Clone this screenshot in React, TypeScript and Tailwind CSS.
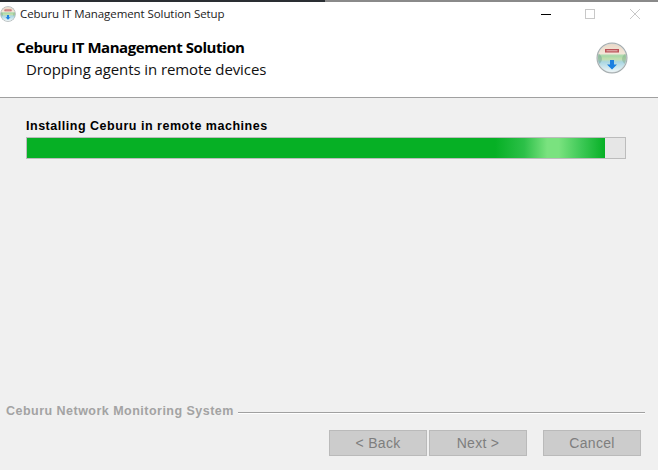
import type { FC } from 'react';

const SetupIcon: FC<{ size: number; id: string }> = ({ size, id }) => (
    <svg width={size} height={size} viewBox="0 0 32 32">
        <defs>
            <clipPath id={`${id}-clip`}>
                <circle cx="16" cy="16" r="14" />
            </clipPath>
            <linearGradient id={`${id}-band`} x1="0" y1="0" x2="0" y2="1">
                <stop offset="0" stopColor="#e9d9c8" />
                <stop offset="0.34" stopColor="#f3e6d8" />
                <stop offset="0.42" stopColor="#a5d8a8" />
                <stop offset="0.54" stopColor="#c4dfae" />
                <stop offset="0.64" stopColor="#a9d6e2" />
                <stop offset="1" stopColor="#eef6f8" />
            </linearGradient>
            <filter id={`${id}-blur`}>
                <feGaussianBlur stdDeviation="0.6" />
            </filter>
        </defs>
        <circle cx="16" cy="16" r="15.5" fill="#a4acae" />
        <circle cx="16" cy="16" r="14.5" fill="#ced4d5" />
        <g clipPath={`url(#${id}-clip)`}>
            <rect x="2" y="2" width="28" height="28" fill={`url(#${id}-band)`} />
            <g filter={`url(#${id}-blur)`}>
                <path d="M2 11q4 3 4 6t-4 6z" fill="#6c9a92" opacity="0.45" />
                <path d="M30 11q-4 3-4 6t4 6z" fill="#7fa984" opacity="0.45" />
                <rect x="9" y="7" width="14" height="3.5" fill="#b23a42" opacity="0.85" />
                <rect x="10.5" y="8" width="11" height="1.4" fill="#f0d4d0" opacity="0.6" />
            </g>
        </g>
        <path d="M14 18h4v4.5h3L16 27.5l-5-5h3z" fill="#1a80e0" filter={`url(#${id}-blur)`} />
    </svg>
);

const WizardButton: FC<{ label: string }> = ({ label }) => (
    <button
        disabled
        className="w-[98px] h-[26px] bg-[#cccccc] border border-[#bababa] text-[#7e7e7e] text-[14px] font-['Liberation_Sans',sans-serif] tracking-[0.3px] flex items-center justify-center"
    >
        {label}
    </button>
);

export default function App() {
    return (
        <div className="w-[658px] h-[470px] flex flex-col bg-[#f0f0f0] overflow-hidden font-['Liberation_Sans',sans-serif]">
            <div className="h-[2px] flex shrink-0">
                <div className="w-[325px] bg-[#2a2e33]" />
                <div className="flex-1 bg-[#8a8a8a]" />
            </div>

            <div className="h-[96px] shrink-0 bg-white border-b border-[#a0a0a0] flex flex-col">
                <div className="h-[24px] flex items-center">
                    <SetupIcon size={16} id="small" />
                    <span className="ml-[4px] text-[11.5px] text-[#1b1b1b] font-['Open_Sans',sans-serif] tracking-[-0.08px]">
                        Ceburu IT Management Solution Setup
                    </span>
                    <div className="ml-auto flex items-center pr-[18px] gap-[35px]">
                        <div className="w-[10px] h-px bg-black -ml-[1px]" />
                        <div className="w-[10px] h-[10px] border border-[#c8c8c8] -ml-[1px]" />
                        <svg width="10" height="10" viewBox="0 0 10 10" stroke="#c8c8c8" strokeWidth="1">
                            <path d="M0 0l10 10M10 0L0 10" />
                        </svg>
                    </div>
                </div>
                <div className="flex flex-1 items-start pt-[11px]">
                    <div className="pl-[16px] flex flex-col">
                        <span className="text-[15px] leading-[20px] font-bold text-black font-['Open_Sans',sans-serif] tracking-[-0.45px]">
                            Ceburu IT Management Solution
                        </span>
                        <span className="pl-[10px] text-[15px] leading-[22px] pt-[1px] text-[#111] font-['Open_Sans',sans-serif] tracking-[-0.1px]">
                            Dropping agents in remote devices
                        </span>
                    </div>
                    <div className="ml-auto pr-[30px] pt-[5px]">
                        <SetupIcon size={32} id="large" />
                    </div>
                </div>
            </div>

            <div className="flex-1 flex flex-col min-h-0">
                <div className="pt-[20px] pl-[26px] pr-[32px]">
                    <div className="text-[12.5px] leading-[16px] font-bold text-black tracking-[0.52px] whitespace-nowrap">
                        Installing Ceburu in remote machines
                    </div>
                    <div className="mt-[3px] h-[22px] border border-[#bcbcbc] bg-[#e6e6e6] flex">
                        <div className="w-[578px] h-full bg-[linear-gradient(90deg,#06b025_0%,#06b025_81%,#2cc048_86%,#7ae27f_90%,#7ae27f_92%,#3cc855_96%,#06b025_100%)]" />
                    </div>
                </div>

                <div className="mt-auto pl-[6px] pr-[13px] flex items-center">
                    <span className="text-[12.5px] font-bold text-[#a3a3a3] tracking-[0.48px] whitespace-nowrap">
                        Ceburu Network Monitoring System
                    </span>
                    <div className="ml-[4px] flex-1 border-t border-[#a0a0a0] border-b-white border-b h-[2px] mt-[2px]" />
                </div>

                <div className="mt-[9px] mb-[14px] pl-[329px] flex">
                    <WizardButton label="< Back" />
                    <div className="ml-[2px]">
                        <WizardButton label="Next >" />
                    </div>
                    <div className="ml-[16px]">
                        <WizardButton label="Cancel" />
                    </div>
                </div>
            </div>
        </div>
    );
}
